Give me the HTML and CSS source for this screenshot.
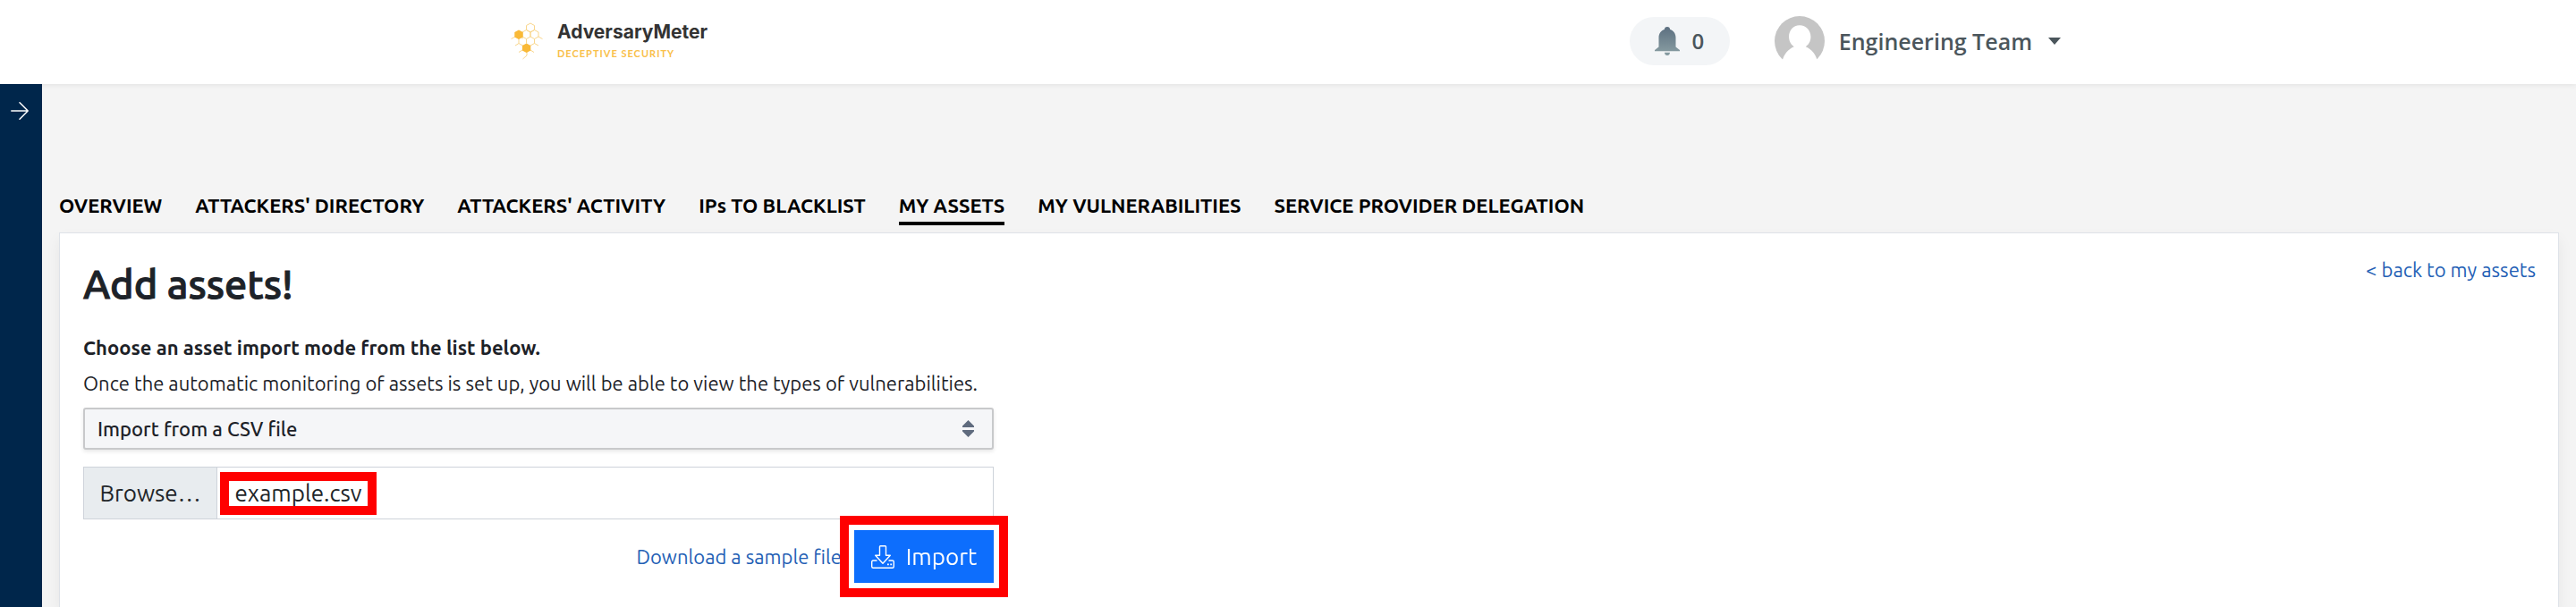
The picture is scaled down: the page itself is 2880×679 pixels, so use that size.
FILE: index.html
```html
<!DOCTYPE html>
<html lang="en">
<head>
<meta charset="utf-8">
<title>AdversaryMeter - Add assets</title>
<link rel="stylesheet" href="styles.css">
</head>
<body>
<header class="topbar">
  <div class="topbar-inner">
    <a class="brand" href="#">
      <svg class="brand-mark" viewBox="0 0 36 42" aria-hidden="true">
        <g fill="none" stroke="#f9d68c" stroke-width="1">
          <path d="M22 1l4.500 2.500v5l-4.500 2.500l-4.500-2.500v-5zM17.500 8.500l4.500 2.500v5l-4.500 2.500l-4.500-2.500v-5zM26.500 8.500l4.500 2.500v5l-4.500 2.500l-4.500-2.500v-5zM5 16l-4.500 2.500M9 17.500v6l-4 2.500M9 23.500l4.500 2.500M13 16v2.500M17.500 18.500v5M26.500 18.500v5l-4.500 2.500M26.500 23.500l4.500 2.500M31 16l4.500 2.500M22 31l4 2.500M13 31l-4 2.500M18 33v4l-4.500 4"/>
        </g>
        <path fill="#f9b937" d="M9 8.500l4.700 2.600v5.300L9 19l-4.700-2.600v-5.300zM17.600 23.500l4.700 2.600v5.300l-4.700 2.600l-4.700-2.600v-5.300z"/>
      </svg>
      <span class="brand-text">
        <span class="brand-name">AdversaryMeter</span>
        <span class="brand-tag">DECEPTIVE SECURITY</span>
      </span>
    </a>
    <div class="account">
      <button class="notifications" type="button" aria-label="Notifications: 0">
        <svg class="bell" viewBox="0 0 28 32" aria-hidden="true">
          <defs><linearGradient id="bell-fill" x1="0" y1="0" x2="0" y2="1"><stop offset="0" stop-color="#5c6f80"/><stop offset="1" stop-color="#84999f"/></linearGradient></defs>
          <path fill="url(#bell-fill)" d="M14 0c2 0 3 1.300 3.200 3C21 4.300 23.500 7.500 23.500 12v10.500L28 26v1.200H0V26l4.500-3.500V12C4.500 7.500 7 4.300 10.800 3C11 1.300 12 0 14 0z"/>
          <path fill="#84999f" d="M11 28.700h6c0 2-1.300 3.300-3 3.300s-3-1.300-3-3.300z"/>
        </svg>
        <span>0</span>
      </button>
      <button class="user" type="button">
        <svg class="avatar" viewBox="0 0 54 54" aria-hidden="true">
          <circle cx="27" cy="27" r="27" fill="#c5c5c5"/>
          <path fill="#fff" d="M27 10c7 0 12 5.500 12 12.500 0 5-2.500 8.500-5.500 10.500 6 2.500 10.500 7.500 12.500 14.500C41 52 34 54.500 27 54.500S13 52 8.500 47.500C10.500 40.500 15 35.500 21 33c-3-2-5.500-5.500-5.500-10.500C15.500 15.500 20 10 27 10z"/>
        </svg>
        <span class="user-name">Engineering Team</span>
        <svg class="caret" viewBox="0 0 14 8" aria-hidden="true"><path fill="#4b565c" d="M0 0h14L7 8z"/></svg>
      </button>
    </div>
  </div>
</header>
<div class="layout">
  <aside class="sidebar">
    <button class="expand" type="button" aria-label="Expand menu">
      <svg viewBox="0 0 20 20" aria-hidden="true"><path fill="none" stroke="#fff" stroke-width="1.500" stroke-linecap="round" stroke-linejoin="round" d="M.8 10h18.400M10 .8l9.200 9.200l-9.200 9.200"/></svg>
    </button>
  </aside>
  <main class="content">
    <nav class="tabs">
      <a href="#">OVERVIEW</a>
      <a href="#">ATTACKERS' DIRECTORY</a>
      <a href="#">ATTACKERS' ACTIVITY</a>
      <a href="#">IPs TO BLACKLIST</a>
      <a class="active" href="#" aria-current="page">MY ASSETS</a>
      <a href="#">MY VULNERABILITIES</a>
      <a href="#">SERVICE PROVIDER DELEGATION</a>
    </nav>
    <section class="card">
      <form class="import-form">
        <h1>Add assets!</h1>
        <label class="lead" for="mode">Choose an asset import mode from the list below.</label>
        <p class="hint">Once the automatic monitoring of assets is set up, you will be able to view the types of vulnerabilities.</p>
        <div class="select-wrap">
          <select id="mode"><option>Import from a CSV file</option></select>
          <svg class="sort" viewBox="0 0 13 19" aria-hidden="true"><path fill="#5f6b7e" d="M0 8V6.500L6.500 0L13 6.500V8zM0 11h13v1.500L6.500 19L0 12.500z"/></svg>
        </div>
        <label class="file">
          <input class="file-input" type="file" accept=".csv">
          <span class="file-button">Browse…</span>
          <span class="file-name">example.csv</span>
        </label>
        <div class="actions">
          <a class="link" href="#">Download a sample file</a>
          <button class="submit" type="button">
            <svg viewBox="0 0 26 26" aria-hidden="true"><g fill="none" stroke="#fff" stroke-width="1.400" stroke-linejoin="round"><path d="M9.500 1.500q0-.8.800-.8h5.400q.8 0 .8.800v9.800h4.800L13 20.300l-8.300-9h4.800zM6.500 17H2.200q-1.500 0-1.500 1.500v5.300q0 1.500 1.500 1.500h21.600q1.500 0 1.500-1.500v-5.300q0-1.500-1.500-1.500h-4.300"/></g><path fill="#fff" d="M18 20.500h1.800v1.800H18zM21.300 20.500h1.800v1.800h-1.800z"/></svg>
            <span>Import</span>
          </button>
        </div>
      </form>
      <a class="link back" href="#">&lt; back to my assets</a>
    </section>
  </main>
</div>
</body>
</html>
```
FILE: styles.css
```css
* { box-sizing: border-box; }

body {
  margin: 0;
  min-height: 100vh;
  display: flex;
  flex-direction: column;
  background: #f4f4f4;
  color: #1d2228;
  font: 22px/32px Ubuntu, "Noto Sans", sans-serif;
}

button, select { font: inherit; color: inherit; }
button { border: 0; background: none; padding: 0; cursor: pointer; }
a { text-decoration: none; }
svg { display: block; flex: none; }

.topbar {
  position: relative;
  background: #fff;
  box-shadow: 0 1px 6px rgba(0, 0, 0, 0.08);
}
.topbar-inner {
  height: 94px;
  max-width: 1738px;
  margin: 0 auto;
  padding: 0 5px 2px 0;
  display: flex;
  justify-content: space-between;
  align-items: center;
}
.brand { display: flex; align-items: center; gap: 16px; }
.brand-mark { width: 36px; height: 42px; }
.brand-text { display: flex; flex-direction: column; gap: 4px; padding-bottom: 2px; }
.brand-name { font: 700 21px/26px Inter, sans-serif; color: #333; }
.brand-tag { font: 700 11px/14px Lato, sans-serif; letter-spacing: 1px; color: #f9c04a; }

.account {
  display: flex;
  align-items: center;
  gap: 50px;
  font: 600 25px/34px "Open Sans", sans-serif;
  color: #4b565c;
}
.notifications {
  width: 112px;
  height: 54px;
  border-radius: 27px;
  background: #f3f5f7;
  display: flex;
  align-items: center;
  justify-content: center;
  gap: 13px;
  font-size: 24px;
}
.bell { width: 28px; height: 32px; }
.user { display: flex; align-items: center; }
.avatar { width: 56px; height: 56px; margin-right: 16px; }
.caret { width: 14px; height: 8px; margin-left: 18px; }

.layout { flex: 1; display: flex; }
.sidebar {
  width: 47px;
  flex: none;
  padding-top: 20px;
  background: #00264b;
  position: relative;
}
.expand { display: block; margin-left: 12px; }
.expand svg { width: 20px; height: 20px; }

.content {
  flex: 1;
  display: flex;
  flex-direction: column;
  padding: 117px 19px 0;
}
.tabs {
  display: flex;
  gap: 37px;
  font-weight: 700;
  line-height: 37px;
  margin-bottom: 8px;
}
.tabs a { color: #000; border-bottom: 4px solid transparent; white-space: nowrap; }
.tabs .active { border-color: #000; }

.card {
  flex: 1;
  display: flex;
  justify-content: space-between;
  align-items: flex-start;
  padding: 25px 25px 26px 26px;
  background: #fff;
  border: 1px solid #dee2e8;
  border-bottom: 0;
  box-shadow: 0 8px 16px rgba(0, 0, 0, 0.06);
}
.import-form { width: 1018px; display: flex; flex-direction: column; }
h1 {
  margin: 0 0 23px;
  font-size: 45px;
  line-height: 64px;
  font-weight: 500;
  -webkit-text-stroke: 1px currentColor;
}
.lead { font-weight: 700; margin-bottom: 8px; }
.hint { margin: 0 0 11px; white-space: nowrap; }

.select-wrap { position: relative; }
.select-wrap select {
  display: block;
  width: 100%;
  height: 47px;
  padding: 0 14px;
  appearance: none;
  font-weight: 500;
  background: #f5f6f8;
  border: 2px solid #c8c9cb;
  border-radius: 3px;
  box-shadow: 0 2px 4px rgba(0, 0, 0, 0.1);
}
.sort { position: absolute; right: 22px; top: 14px; width: 13px; height: 19px; pointer-events: none; }

.file {
  position: relative;
  display: flex;
  align-items: center;
  height: 59px;
  margin-top: 19px;
  border: 1px solid #ced3da;
  font-size: 26px;
  color: #212529;
}
.file-input { position: absolute; inset: 0; width: 100%; opacity: 0; cursor: pointer; }
.file-button {
  align-self: stretch;
  width: 149px;
  display: flex;
  align-items: center;
  justify-content: center;
  background: #e8ecef;
  border-right: 1px solid #ced3da;
}
.file-name {
  height: 48px;
  width: 175px;
  margin-left: 3px;
  display: flex;
  align-items: center;
  justify-content: center;
  border: 10px solid #f00;
}

.actions { display: flex; justify-content: flex-end; align-items: center; gap: 14px; margin-top: 12px; }
.link { color: #2360b5; }
.submit {
  position: relative;
  display: flex;
  align-items: center;
  justify-content: center;
  gap: 13px;
  width: 156px;
  height: 59px;
  background: #0d6efd;
  color: #fff;
  font-size: 26px;
  box-shadow: 0 0 0 6px #fff, 0 0 0 16px #f00;
}
.submit svg { width: 26px; height: 26px; }
```
